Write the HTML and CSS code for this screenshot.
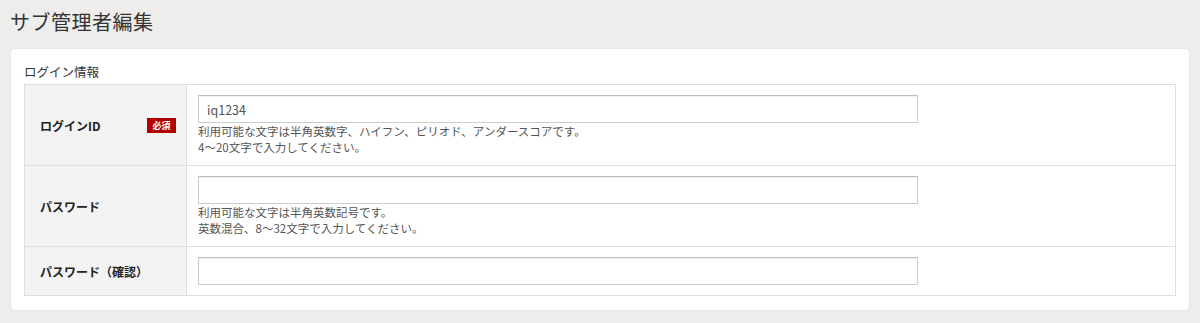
FILE: index.html
```html
<!DOCTYPE html>
<html lang="ja">
<head>
<meta charset="utf-8">
<title>サブ管理者編集</title>
<link rel="stylesheet" href="styles.css">
</head>
<body>
<h1 class="page-title">サブ管理者編集</h1>
<div class="card">
  <div class="section-label">ログイン情報</div>
  <table class="form-table">
    <tr class="row-tall">
      <th><div class="th-inner"><span>ログインID</span><span class="badge">必須</span></div></th>
      <td>
        <input class="text-input" type="text" value="iq1234">
        <p class="help">利用可能な文字は半角英数字、ハイフン、ピリオド、アンダースコアです。<br>4〜20文字で入力してください。</p>
      </td>
    </tr>
    <tr class="row-tall">
      <th><div class="th-inner"><span>パスワード</span></div></th>
      <td>
        <input class="text-input" type="password" value="">
        <p class="help">利用可能な文字は半角英数記号です。<br>英数混合、8〜32文字で入力してください。</p>
      </td>
    </tr>
    <tr>
      <th><div class="th-inner"><span>パスワード（確認）</span></div></th>
      <td>
        <input class="text-input" type="password" value="">
      </td>
    </tr>
  </table>
</div>
</body>
</html>
```

FILE: styles.css
```css
* { box-sizing: border-box; }
html, body { margin: 0; padding: 0; }
body {
  background: #eeedeb;
  font-family: "Noto Sans CJK JP", "Noto Sans", sans-serif;
  color: #333;
  width: 1200px;
  height: 323px;
  overflow: hidden;
}
.page-title {
  margin: 0 0 10px;
  padding: 6px 10px 0;
  font-size: 20px;
  line-height: 32px;
  font-weight: normal;
  color: #333;
  letter-spacing: 0.5px;
}
.card {
  margin: 0 10px;
  background: #fff;
  border: 1px solid #e6e6e4;
  border-radius: 5px;
  padding: 13px 13px 14px;
}
.section-label {
  font-size: 12.5px;
  line-height: 20px;
  color: #333;
  margin-bottom: 2px;
}
.form-table {
  width: 100%;
  border-collapse: collapse;
  border: 1px solid #dedede;
}
.form-table th,
.form-table td {
  border: 1px solid #dedede;
  vertical-align: middle;
}
.form-table th {
  width: 162px;
  background: #f3f3f3;
  text-align: left;
  font-size: 12px;
  font-weight: bold;
  color: #222;
  padding: 0 10px 0 15px;
}
.th-inner {
  display: flex;
  align-items: center;
  justify-content: space-between;
}
.badge {
  display: inline-block;
  background: #b30000;
  color: #fff;
  font-size: 9px;
  font-weight: bold;
  line-height: 15px;
  width: 29px;
  text-align: center;
}
.form-table td {
  padding: 10px 11px;
}
.text-input {
  display: block;
  width: 720px;
  height: 28px;
  border: 1px solid #cccccc;
  border-top-color: #bdbdbd;
  box-shadow: inset 0 1px 1px rgba(0,0,0,0.06);
  padding: 0 8px;
  font-family: "Noto Sans CJK JP", "Noto Sans", sans-serif;
  font-size: 12.5px;
  color: #555;
  background: #fff;
  outline: none;
}
.help {
  margin: 0;
  font-size: 11.5px;
  line-height: 16px;
  color: #555;
}
```
